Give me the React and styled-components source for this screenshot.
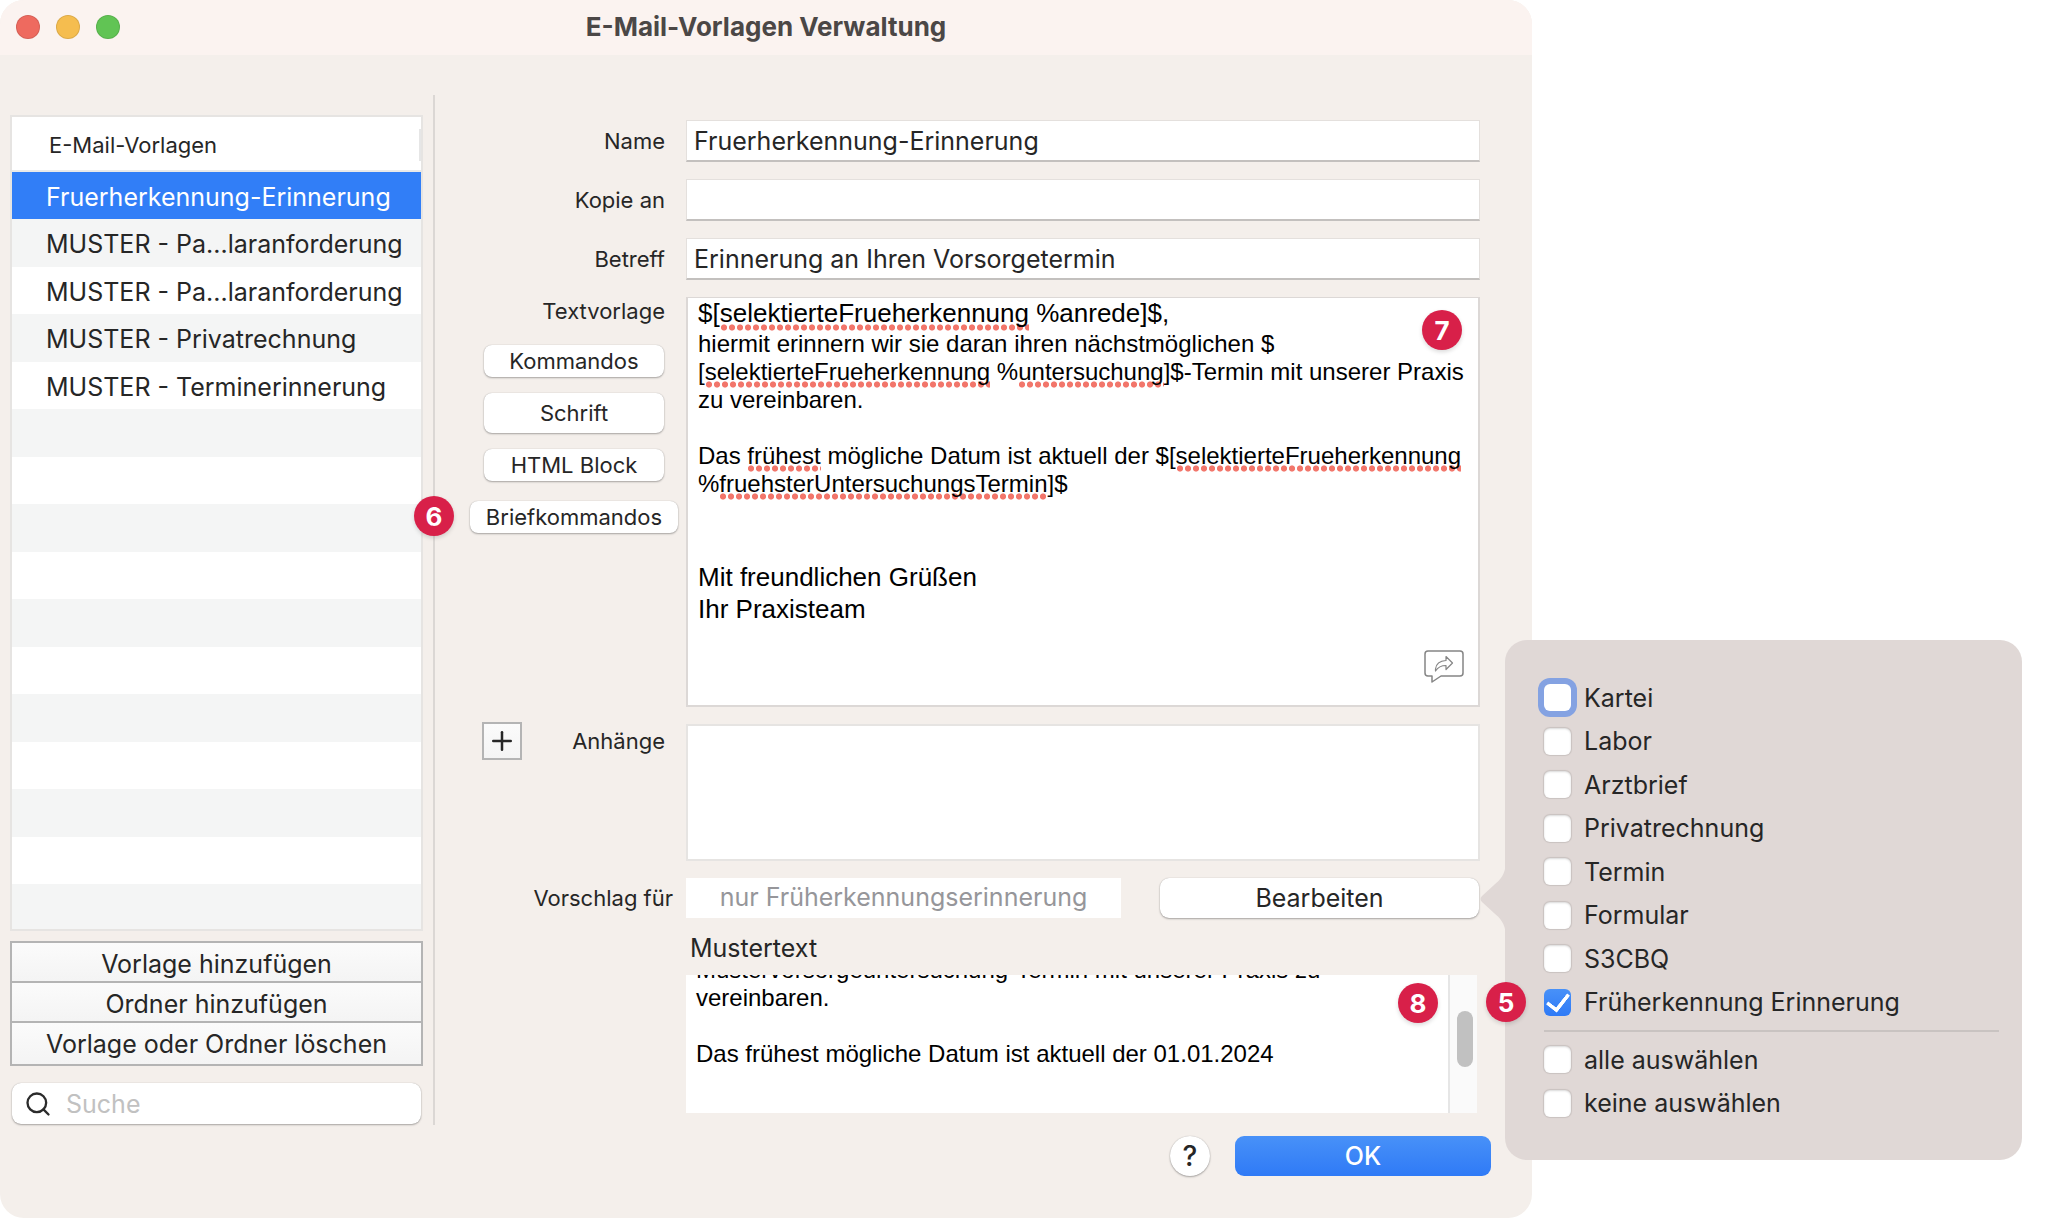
import React, { useState } from "react";
import styled, { createGlobalStyle, css } from "styled-components";
import { Plus, Search } from "lucide-react";

const templates = [
  "Fruerherkennung-Erinnerung",
  "MUSTER - Pa...laranforderung",
  "MUSTER - Pa...laranforderung",
  "MUSTER - Privatrechnung",
  "MUSTER - Terminerinnerung",
];

const LIST_ROWS = 16;

const categories = [
  "Kartei",
  "Labor",
  "Arztbrief",
  "Privatrechnung",
  "Termin",
  "Formular",
  "S3CBQ",
  "Früherkennung Erinnerung",
];

const Sidebar = () => {
  const [selected, setSelected] = useState(0);
  const emptyRows = Array.from({ length: LIST_ROWS - templates.length });

  return (
    <SidebarColumn>
      <TemplateList>
        <ListHeader>
          E-Mail-Vorlagen
          <ColumnGrip />
        </ListHeader>
        <Rows>
          {templates.map((name, index) => (
            <Row key={index}>
              <RowButton
                type="button"
                $active={index === selected}
                onClick={() => setSelected(index)}
              >
                {name}
              </RowButton>
            </Row>
          ))}
          {emptyRows.map((_, index) => (
            <Row key={`empty-${index}`} aria-hidden="true" />
          ))}
        </Rows>
      </TemplateList>
      <ActionStack>
        <ActionButton type="button">Vorlage hinzufügen</ActionButton>
        <ActionButton type="button">Ordner hinzufügen</ActionButton>
        <ActionButton type="button">Vorlage oder Ordner löschen</ActionButton>
      </ActionStack>
      <SearchBox>
        <Search size={28} strokeWidth={2} color="#2b2b2b" aria-hidden="true" />
        <SearchInput type="search" placeholder="Suche" aria-label="Suche" />
      </SearchBox>
    </SidebarColumn>
  );
};

const CategoryPopover = () => {
  const [checked, setChecked] = useState(["Früherkennung Erinnerung"]);

  const toggle = (name) => {
    setChecked((current) =>
      current.includes(name) ? current.filter((n) => n !== name) : [...current, name]
    );
  };

  return (
    <Popover>
      <PopoverArrow viewBox="0 0 26 72" aria-hidden="true">
        <path d="M26 0 C25 12 20 17 14 22 L2 33 Q-1 36 2 39 L14 50 C20 55 25 60 26 72 Z" />
      </PopoverArrow>
      <CheckGroup $height={348}>
        {categories.map((name, index) => (
          <CheckRow key={name}>
            <Checkbox
              type="checkbox"
              $focused={index === 0}
              checked={checked.includes(name)}
              onChange={() => toggle(name)}
            />
            {name}
          </CheckRow>
        ))}
      </CheckGroup>
      <Separator />
      <CheckGroup $height={87}>
        <CheckRow>
          <Checkbox
            type="checkbox"
            checked={checked.length === categories.length}
            onChange={() => setChecked(categories)}
          />
          alle auswählen
        </CheckRow>
        <CheckRow>
          <Checkbox
            type="checkbox"
            checked={checked.length === 0}
            onChange={() => setChecked([])}
          />
          keine auswählen
        </CheckRow>
      </CheckGroup>
      <Badge $left={-19} $top={342}>5</Badge>
    </Popover>
  );
};

const TemplateEditor = () => (
  <EditorFrame>
    <Editor
      role="textbox"
      aria-multiline="true"
      aria-labelledby="textvorlage"
      contentEditable
      suppressContentEditableWarning
      spellCheck={false}
    >
      <Line $large>
        $[<Misspelled>selektierteFrueherkennung</Misspelled> %anrede]$,
      </Line>
      <Line>hiermit erinnern wir sie daran ihren nächstmöglichen $</Line>
      <Line>
        [<Misspelled>selektierteFrueherkennung</Misspelled> %
        <Misspelled>untersuchung</Misspelled>]$-Termin mit unserer Praxis
      </Line>
      <Line>zu vereinbaren.</Line>
      <Line />
      <Line>
        Das <Misspelled>frühest</Misspelled> mögliche Datum ist aktuell der $[
        <Misspelled>selektierteFrueherkennung</Misspelled>
      </Line>
      <Line>
        %<Misspelled>fruehsterUntersuchungsTermin</Misspelled>]$
      </Line>
      <Line $large />
      <Line $large />
      <Line $large>Mit freundlichen Grüßen</Line>
      <Line $large>Ihr Praxisteam</Line>
    </Editor>
    <Badge $right={16} $top={12}>7</Badge>
    <ShareButton type="button" aria-label="Teilen">
      <svg width="40" height="34" viewBox="0 0 40 34" fill="none" stroke="#858585" strokeWidth="1.5" strokeLinejoin="round">
        <path d="M4 1H36Q39 1 39 4V23Q39 26 36 26H17L8 32V26H4Q1 26 1 23V4Q1 1 4 1Z" />
        <path d="M11.500 21V19Q12.500 11 22 10.500V6.500L28.500 13L22 19.500V15.500Q15 15.500 11.500 21Z" strokeWidth="1.200" />
      </svg>
    </ShareButton>
  </EditorFrame>
);

const App = () => (
  <>
    <GlobalStyle />
    <Page>
      <Window>
        <TitleBar>
          <Lights>
            <Light type="button" aria-label="Schließen" $color="#ee6a5f" />
            <Light type="button" aria-label="Minimieren" $color="#f5bd4f" />
            <Light type="button" aria-label="Vergrößern" $color="#61c454" />
          </Lights>
          <h1>E-Mail-Vorlagen Verwaltung</h1>
        </TitleBar>
        <Content>
          <Sidebar />
          <Divider />
          <Form onSubmit={(e) => e.preventDefault()}>
            <Field>
              <Label htmlFor="name">Name</Label>
              <TextInput id="name" defaultValue="Fruerherkennung-Erinnerung" />
            </Field>
            <Field>
              <Label htmlFor="kopie">Kopie an</Label>
              <TextInput id="kopie" />
            </Field>
            <Field>
              <Label htmlFor="betreff">Betreff</Label>
              <TextInput id="betreff" defaultValue="Erinnerung an Ihren Vorsorgetermin" />
            </Field>
            <Field $align="stretch">
              <Tools>
                <ToolsLabel id="textvorlage">Textvorlage</ToolsLabel>
                <ToolButton type="button">Kommandos</ToolButton>
                <ToolButton type="button" $tall>Schrift</ToolButton>
                <ToolButton type="button">HTML Block</ToolButton>
                <Anchor>
                  <ToolButton type="button" $wide>Briefkommandos</ToolButton>
                  <Badge $left={-56} $top={-5}>6</Badge>
                </Anchor>
              </Tools>
              <TemplateEditor />
            </Field>
            <Field $align="stretch">
              <AttachmentSide>
                <AddButton type="button" aria-label="Anhang hinzufügen">
                  <Plus size={30} strokeWidth={2} />
                </AddButton>
                <span id="anhaenge">Anhänge</span>
              </AttachmentSide>
              <Attachments role="list" aria-labelledby="anhaenge" />
            </Field>
            <SuggestionField>
              <Label $near htmlFor="vorschlag">Vorschlag für</Label>
              <SuggestionInput
                id="vorschlag"
                readOnly
                defaultValue="nur Früherkennungserinnerung"
              />
              <ButtonAnchor>
                <EditButton type="button" aria-expanded="true">Bearbeiten</EditButton>
                <CategoryPopover />
              </ButtonAnchor>
            </SuggestionField>
            <Preview>
              <h2>Mustertext</h2>
              <PreviewBox>
                <PreviewText>
                  <Line>Mustervorsorgeuntersuchung-Termin mit unserer Praxis zu</Line>
                  <Line>vereinbaren.</Line>
                  <Line />
                  <Line>Das frühest mögliche Datum ist aktuell der 01.01.2024</Line>
                </PreviewText>
                <ScrollTrack>
                  <ScrollThumb />
                </ScrollTrack>
                <Badge $right={39} $top={8}>8</Badge>
              </PreviewBox>
            </Preview>
            <Footer>
              <HelpButton type="button" aria-label="Hilfe">?</HelpButton>
              <OkButton type="submit">OK</OkButton>
            </Footer>
          </Form>
        </Content>
      </Window>
    </Page>
  </>
);

const GlobalStyle = createGlobalStyle`
  * {
    box-sizing: border-box;
  }

  body {
    margin: 0;
    background: #ffffff;
    color: #262626;
    font-family: Inter, "Liberation Sans", sans-serif;
    font-size: 25px;
  }

  button,
  input {
    font: inherit;
    color: inherit;
    margin: 0;
    outline: none;
  }

  h1,
  h2,
  ul {
    margin: 0;
    padding: 0;
  }
`;

const raised = css`
  border: none;
  background: #ffffff;
  box-shadow: 0 0 1px rgba(0, 0, 0, 0.25), 0 1px 2px rgba(0, 0, 0, 0.3);
`;

const Page = styled.main`
  min-width: 1500px;
  padding-right: 516px;
`;

const Window = styled.section`
  min-height: 1218px;
  border-radius: 24px;
  background: #f4efeb;
`;

const TitleBar = styled.header`
  display: grid;
  grid-template-columns: 1fr auto 1fr;
  align-items: center;
  height: 55px;
  padding: 0 16px 2px;
  border-radius: 24px 24px 0 0;
  background: #fbf3f0;

  h1 {
    color: #4b4746;
    font-size: 26px;
    font-weight: 700;
  }
`;

const Lights = styled.div`
  display: flex;
  gap: 16px;
`;

const Light = styled.button`
  width: 24px;
  height: 24px;
  padding: 0;
  border: 1px solid rgba(0, 0, 0, 0.1);
  border-radius: 50%;
  background: ${({ $color }) => $color};
`;

const Content = styled.div`
  display: flex;
  align-items: flex-start;
  padding: 40px 0 0 10px;
`;

const Divider = styled.div`
  width: 2px;
  height: 1030px;
  margin-left: 10px;
  background: #dbd7d4;
`;

/* Sidebar */
const SidebarColumn = styled.aside`
  display: flex;
  flex-direction: column;
  width: 413px;
  padding-top: 20px;
`;

const TemplateList = styled.div`
  display: flex;
  flex-direction: column;
  height: 816px;
  border: 2px solid #e6e4e2;
  background: #ffffff;
`;

const ListHeader = styled.div`
  display: flex;
  align-items: center;
  justify-content: space-between;
  flex-shrink: 0;
  height: 55px;
  padding: 2px 0 0 37px;
  border-bottom: 2px solid #e9e9e9;
  font-size: 22px;
`;

const ColumnGrip = styled.span`
  width: 2px;
  height: 32px;
  background: #e6e6e6;
`;

const Rows = styled.ul`
  flex: 1;
  min-height: 0;
  overflow: hidden;
  list-style: none;
`;

const Row = styled.li`
  display: flex;
  height: 47px;

  &:nth-child(even) {
    height: 48px;
    background: #f4f5f5;
  }
`;

const RowButton = styled.button`
  flex: 1;
  padding: 2px 0 0 34px;
  border: none;
  background: ${({ $active }) => ($active ? "#317ef7" : "transparent")};
  color: ${({ $active }) => ($active ? "#ffffff" : "#262626")};
  text-align: left;
  white-space: nowrap;
`;

const ActionStack = styled.div`
  display: flex;
  flex-direction: column;
  gap: 2px;
  height: 125px;
  margin-top: 10px;
  border: 2px solid #b4b4b4;
  background: #b4b4b4;
`;

const ActionButton = styled.button`
  flex: 0 0 38px;
  padding: 4px 0 0;
  border: none;
  background: linear-gradient(#fbfbfb, #f4f4f4);

  &:last-child {
    flex: 1;
    padding-top: 0;
  }
`;

const SearchBox = styled.div`
  ${raised}
  display: flex;
  align-items: center;
  gap: 14px;
  height: 41px;
  margin: 17px 2px 0;
  padding: 0 12px;
  border-radius: 9px;
`;

const SearchInput = styled.input`
  flex: 1;
  min-width: 0;
  padding: 0;
  border: none;
  background: transparent;

  &::placeholder {
    color: #c1c1c1;
    opacity: 1;
  }
`;

/* Form */
const Form = styled.form`
  display: flex;
  flex: 1;
  flex-direction: column;
  gap: 17px;
  min-width: 0;
  padding: 25px 52px 0 0;
`;

const Field = styled.div`
  display: flex;
  align-items: ${({ $align }) => $align || "center"};
`;

const Label = styled.label`
  flex-shrink: 0;
  width: 251px;
  padding-right: ${({ $near }) => ($near ? 13 : 21)}px;
  font-size: 22px;
  text-align: right;
`;

const TextInput = styled.input`
  flex: 1;
  height: 42px;
  padding: 0 7px;
  border: 1px solid #e4e0dd;
  border-bottom: 2px solid #c3c0be;
  background: #ffffff;
`;

const Tools = styled.div`
  display: grid;
  flex-shrink: 0;
  grid-template-rows: 38px;
  grid-auto-rows: 52px;
  place-items: center;
  align-content: start;
  width: 251px;
  padding: 0 8px 0 35px;
`;

const ToolsLabel = styled.span`
  place-self: start end;
  padding-right: 13px;
  font-size: 22px;
  line-height: 28px;
`;

const ToolButton = styled.button`
  ${raised}
  width: ${({ $wide }) => ($wide ? 208 : 180)}px;
  height: ${({ $tall }) => ($tall ? 40 : 32)}px;
  padding: 0;
  border-radius: 8px;
  font-size: 22px;
`;

const Anchor = styled.div`
  display: flex;
  position: relative;
`;

const EditorFrame = styled.div`
  position: relative;
  flex: 1;
  min-width: 0;
  height: 410px;
  border: 2px solid #dcd8d6;
  border-top-width: 1px;
  background: #ffffff;
`;

const Editor = styled.div`
  height: 100%;
  padding: 0 10px;
  overflow: hidden;
  outline: none;
`;

const Line = styled.div`
  min-height: ${({ $large }) => ($large ? 32 : 28)}px;
  color: #000000;
  font-family: "Liberation Sans", Arial, sans-serif;
  font-size: ${({ $large }) => ($large ? 26 : 24)}px;
  line-height: ${({ $large }) => ($large ? 31 : 28)}px;
  white-space: nowrap;
`;

/* Spell checker marks: a row of round dots under the word */
const Misspelled = styled.span`
  padding-bottom: 3px;
  background: radial-gradient(circle, #f2766b 60%, transparent 75%) left bottom / 8px 7px repeat-x;
  background-image: radial-gradient(circle closest-side, #f2766b 75%, transparent 100%);
`;

const ShareButton = styled.button`
  position: absolute;
  right: 14px;
  bottom: 21px;
  padding: 0;
  border: none;
  background: transparent;

  svg {
    display: block;
  }
`;

const AttachmentSide = styled.div`
  display: flex;
  flex-shrink: 0;
  align-items: center;
  align-self: flex-start;
  justify-content: space-between;
  width: 251px;
  margin-top: -2px;
  padding: 0 21px 0 47px;
  font-size: 22px;
`;

const AddButton = styled.button`
  display: flex;
  align-items: center;
  justify-content: center;
  width: 40px;
  height: 38px;
  padding: 0;
  border: 2px solid #b4b4b4;
  background: linear-gradient(#fbfbfb, #f4f4f4);
`;

const Attachments = styled.div`
  flex: 1;
  height: 137px;
  border: 2px solid #e6e4e2;
  background: #ffffff;
`;

const SuggestionField = styled(Field)`
  height: 40px;
`;

const SuggestionInput = styled.input`
  flex: 435 1 0;
  min-width: 0;
  height: 40px;
  padding: 0 0 2px;
  border: none;
  background: #ffffff;
  color: #96969a;
  text-align: center;
`;

const ButtonAnchor = styled.div`
  position: relative;
  flex: 319 1 0;
  margin: 0 1px 0 39px;
`;

const EditButton = styled.button`
  ${raised}
  width: 100%;
  height: 40px;
  border-radius: 9px;
`;

const Preview = styled.section`
  margin: -17px 3px 0 251px;

  h2 {
    padding: 13px 0 0 4px;
    height: 57px;
    font-size: 25px;
    font-weight: 400;
    line-height: 34px;
  }
`;

const PreviewBox = styled.div`
  display: flex;
  position: relative;
  height: 138px;
  background: #ffffff;
`;

const PreviewText = styled.div`
  display: flex;
  flex: 1;
  flex-direction: column;
  justify-content: flex-end;
  min-width: 0;
  padding: 0 10px 45px;
  overflow: hidden;
`;

const ScrollTrack = styled.div`
  width: 29px;
  padding: 36px 5px 0 7px;
  border-left: 2px solid #e6e6e6;
  background: #fafafa;
`;

const ScrollThumb = styled.div`
  width: 16px;
  height: 56px;
  border-radius: 8px;
  background: #c1c1c1;
`;

const Footer = styled.footer`
  display: flex;
  justify-content: flex-end;
  gap: 25px;
  margin: 6px -11px 0 0;
`;

const HelpButton = styled.button`
  ${raised}
  width: 40px;
  height: 40px;
  padding: 0;
  border-radius: 50%;
  font-size: 28px;
  font-weight: 500;
`;

const OkButton = styled.button`
  width: 256px;
  height: 40px;
  border: none;
  border-radius: 9px;
  background: linear-gradient(#4891f8, #2f7af6);
  color: #ffffff;
  font-weight: 500;
`;

/* Popover */
const Popover = styled.div`
  position: absolute;
  z-index: 1;
  top: -238px;
  left: calc(100% + 26px);
  width: 517px;
  padding: 36px 23px 35px 39px;
  border-radius: 22px;
  background: #e0d8d6;
`;

const PopoverArrow = styled.svg`
  position: absolute;
  top: 223px;
  left: -25px;
  width: 26px;
  height: 72px;
  fill: #e0d8d6;
`;

const CheckGroup = styled.div`
  display: flex;
  flex-direction: column;
  height: ${({ $height }) => $height}px;
`;

const CheckRow = styled.label`
  display: flex;
  flex: 1;
  align-items: center;
  gap: 13px;
`;

const Checkbox = styled.input`
  display: grid;
  place-items: center;
  width: 27px;
  height: 27px;
  border-radius: 6px;
  background: #ffffff;
  box-shadow: ${({ $focused }) =>
    $focused ? "0 0 0 6px #84a2e2" : "0 0 1px 1px rgba(0, 0, 0, 0.1), inset 0 1px 2px rgba(0, 0, 0, 0.15)"};
  appearance: none;

  &:checked {
    background: linear-gradient(#4891f8, #2f7af6);
    box-shadow: none;
  }

  &:checked::after {
    content: "";
    width: 10px;
    height: 18px;
    margin-bottom: 4px;
    border: solid #ffffff;
    border-width: 0 4px 4px 0;
    border-radius: 1px;
    transform: rotate(38deg);
  }
`;

const Separator = styled.div`
  height: 2px;
  margin: 6px 0;
  background: #c9c3c1;
`;

const Badge = styled.span`
  display: flex;
  position: absolute;
  z-index: 1;
  top: ${({ $top }) => $top}px;
  ${({ $left }) => $left !== undefined && `left: ${$left}px;`}
  ${({ $right }) => $right !== undefined && `right: ${$right}px;`}
  align-items: center;
  justify-content: center;
  width: 40px;
  height: 40px;
  border-radius: 50%;
  background: #d82049;
  box-shadow: 0 2px 4px rgba(0, 0, 0, 0.15);
  color: #ffffff;
  font-size: 26px;
  font-weight: 700;
`;

export default App;
